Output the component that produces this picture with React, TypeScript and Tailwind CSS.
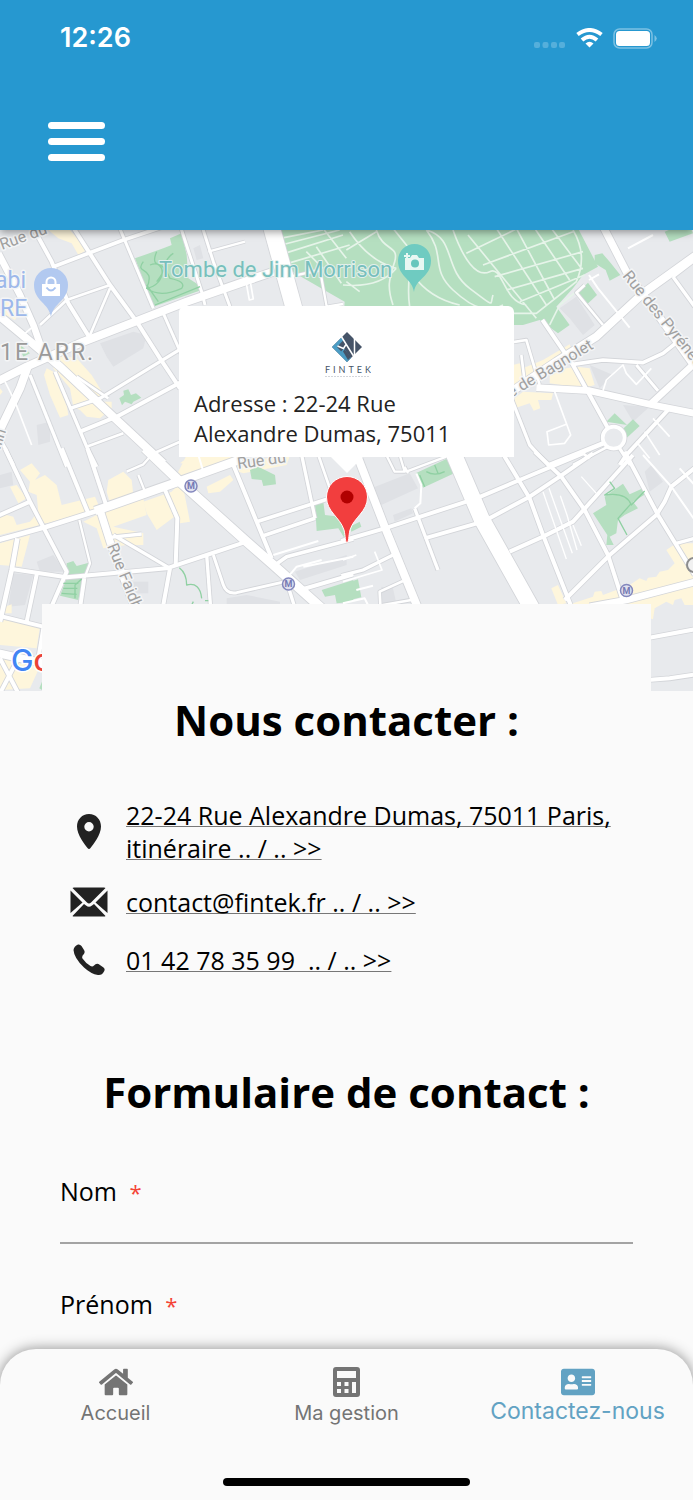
import React from "react";
import { FaHome, FaAddressCard } from "react-icons/fa";

type Road = [number, string];
type Tile = {
  x: number;
  y: number;
  parks: string[];
  shops: string[];
  blocks: string[];
  roads: Road[];
  paths: string[];
};

const tiles: Tile[] = [
  {
    x: 0,
    y: 675,
    parks: [
      "405,100 490,70 515,60 510,40 545,25 560,90 565,160 605,185 605,195 460,245",
      "50,350 90,385 70,395",
      "358,520 372,510 370,497 385,493 393,510 408,505 424,518 400,530 395,538 375,530 366,541",
    ],
    shops: [
      "145,15 210,15 260,75 235,90 215,55 175,40",
      "20,220 60,255 45,285 0,260",
      "140,430 160,440 200,540 205,570 180,578 150,510 132,450",
      "170,390 230,400 275,450 315,515 290,530 335,530 335,550 300,580 260,575 240,555 220,545 210,490 160,430",
      "540,715 560,700 700,700 690,720",
      "0,490 8,500 0,510",
    ],
    blocks: ["300,355 400,320 440,330 430,370 340,425 320,395", "110,600 150,590 150,650 115,660", "580,70 600,60 610,100 590,105"],
    roads: [
      [20, "M-5 85L60 210L100 300L130 385"],
      [24, "M-5 270L85 345L180 425L345 580L490 715"],
      [24, "M-5 468L80 425L250 350L560 230L820 140"],
      [24, "M85 420L60 490L-5 625"],
      [12, "M95 0L155 110L205 235L270 340"],
      [12, "M215 0L330 180L410 290L480 400L540 490"],
      [11, "M160 125L370 45L490 5"],
      [9, "M355 0L460 250"],
      [9, "M540 0L605 200L615 240"],
      [9, "M605 0L640 110L690 245"],
      [50, "M810 -10L882 250"],
      [8, "M120 300L200 225L330 180"],
      [8, "M330 190L270 330"],
      [9, "M490 265L545 390"],
      [10, "M545 370L300 520L210 550"],
      [12, "M545 470L350 575L240 620"],
      [10, "M90 450L200 725"],
      [10, "M165 440L260 665L290 725"],
      [8, "M230 455L325 520"],
      [8, "M260 665L370 625"],
      [8, "M450 690L540 650"],
      [10, "M0 640L40 720"],
      [5, "M15 470L45 530L95 660"],
      [7, "M625 80L735 50"],
      [7, "M870 155L960 135L980 245L1029 237"],
      [5, "M738 170L748 225L760 222L750 165"],
      [5, "M75 325L105 300"],
    ],
    paths: ["M430 110C400 150 470 120 440 190C500 180 500 100 450 120M470 80C440 150 530 90 470 170M440 190Q480 220 545 190Q560 170 510 160Q480 110 520 85M465 240L600 185M440 180L475 230"],
  },
  {
    x: 1029,
    y: 675,
    parks: [
      "-189,10 705,10 765,125 720,150 690,190 640,245 680,300 645,325 590,285 540,300 400,300 0,300 5,230 -170,130",
      "755,90 778,85 800,110 832,150 800,167 788,135 755,115",
      "735,173 762,210 730,240 702,205",
      "965,20 990,10 1040,0 1050,25 980,50",
      "815,565 852,600 790,590",
      "870,583 890,603 850,640 842,610",
    ],
    shops: [
      "510,420 530,415 540,430 600,405 680,358 690,385 680,400 580,460 510,480",
      "515,520 540,500 630,505 625,525 585,525 592,550 572,557 560,535 515,550",
      "700,425 740,430 755,480 720,490 620,475 620,450 670,430",
    ],
    blocks: ["650,250 700,215 755,300 720,330 680,280", "740,420 810,450 770,490", "840,540 920,545 870,590"],
    roads: [
      [22, "M778 0L850 140L920 235L1055 425"],
      [24, "M1060 90L900 205L760 335L640 410L505 500"],
      [20, "M580 488L740 497L930 540L1055 565"],
      [20, "M1060 410L925 535"],
      [12, "M975 555L850 690L830 720"],
      [12, "M598 285L690 420L740 510L795 610"],
      [11, "M690 418L780 405L900 413L960 385L1010 345"],
      [9, "M880 420L945 497"],
      [14, "M780 655L620 720"],
      [8, "M720 685L740 700M690 720L795 665"],
      [10, "M830 670L862 720"],
      [10, "M505 520L560 660L620 725"],
      [8, "M535 390L545 470"],
      [8, "M505 352L550 345L590 480"],
      [8, "M725 180L700 203L780 300"],
      [6, "M738 150L765 190L860 308M738 165L768 148"],
      [5, "M635 500L683 630L665 655L617 660L612 620L670 598"],
      [10, "M990 155L1055 245M990 155L1055 105"],
      [6, "M855 70L930 30"],
      [5, "M780 497L790 465L840 420L850 445L880 478L925 430"],
      [5, "M930 580L980 635M905 620L950 690M880 650L920 700"],
    ],
    paths: [],
  },
  {
    x: 0,
    y: 1365,
    parks: [
      "750,45 775,35 825,60 828,88 790,93 785,75 755,72",
      "200,325 220,318 230,333 272,322 250,365 235,435 180,422 200,370",
      "945,145 970,140 975,180 1020,185 1050,210 1040,260 1015,220 950,228",
      "965,405 1060,375 1060,440 1010,445 1005,420 975,425",
      "126,680 118,700 126,705",
    ],
    shops: [
      "60,45 95,25 120,55 105,75 135,60 170,90 185,150 285,125 300,160 140,205 0,240 0,175 40,185 50,210 90,200 115,170 110,120 85,110 90,80",
      "30,95 50,90 80,130 55,145",
      "325,75 370,50 395,75 400,120 330,145 320,110",
      "430,140 515,110 545,75 570,200 540,205 530,180 470,225 440,175",
      "525,70 560,0 700,0 680,30 600,45 570,60",
      "620,95 690,60 700,75 660,110 625,115",
      "320,160 430,130 440,180 340,215 430,235 430,270 380,270 310,280 290,220 250,200 290,180",
      "700,45 800,10 870,0 860,30 730,55",
      "0,265 90,240 65,335 0,330",
      "0,485 120,515 110,580 0,570",
      "0,610 126,620 90,700 0,705",
      "15,455 35,448 35,475 15,475",
    ],
    blocks: ["110,320 160,300 195,350 120,350", "680,430 740,420 840,440 840,450 680,450", "885,350 1040,300 1040,330 900,375", "0,60 35,50 40,90 0,100", "25,510 75,520 75,565 25,555", "400,380 445,380 445,415 400,415", "40,355 100,360 75,450 25,455"],
    roads: [
      [14, "M-5 255L140 215L290 168"],
      [26, "M285 168L550 75L725 12"],
      [12, "M15 -20L90 140L200 350L150 465"],
      [12, "M185 -20L265 175"],
      [12, "M262 -20L320 155"],
      [22, "M300 165L330 260L405 460"],
      [12, "M-5 182L90 140"],
      [14, "M52 250L35 345L0 500"],
      [12, "M35 342L200 367L500 340L620 300L740 260"],
      [12, "M112 350L80 500"],
      [12, "M253 370L240 460"],
      [7, "M238 195L270 325L253 370"],
      [12, "M495 105L532 190L527 330"],
      [10, "M330 247L425 237"],
      [10, "M340 240L510 340"],
      [12, "M510 340L488 460"],
      [10, "M620 300L632 460"],
      [9, "M640 300L670 390Q680 418 710 413L855 380"],
      [28, "M435 -20L545 85L740 260L820 330L965 460"],
      [12, "M700 30L770 200L815 310"],
      [11, "M770 200L990 130"],
      [11, "M790 242L945 190"],
      [10, "M945 190L905 0"],
      [8, "M955 0L1000 130"],
      [11, "M825 330L860 305L1060 252"],
      [6, "M865 365L890 335L965 315M820 300L955 258M910 335L1060 305"],
      [12, "M900 405L1060 358"],
      [10, "M865 395L885 460"],
      [7, "M380 50L430 28L450 5"],
      [7, "M415 60L435 110"],
      [6, "M595 0L610 50"],
      [12, "M0 483L130 515"],
      [24, "M-5 595L130 625"],
      [12, "M0 715L60 600"],
      [12, "M0 610L55 715"],
      [12, "M130 520L115 610"],
    ],
    paths: ["M538 338Q560 355 560 390Q600 380 605 430M575 450L580 440M615 437L625 437M190 385L235 385M190 400L232 400M185 415L230 418M245 372L225 390L225 430"],
  },
  {
    x: 1029,
    y: 1365,
    parks: [
      "218,55 310,12 337,53 240,98",
      "785,125 795,118 840,86 860,118 900,100 907,118 870,140 885,160 845,180 825,195 820,235 800,245 812,270 790,270 793,240 750,175 790,150",
      "0,388 45,373 55,427 0,440",
      "20,215 50,200 55,215 25,230",
    ],
    shops: [
      "625,400 645,390 670,445 645,450",
      "690,445 750,425 755,410 775,408 780,420 860,390 890,370 910,378 915,368 940,365 950,350 975,345 995,325 970,285 1000,265 1055,265 1055,450 1025,450 1015,430 995,435 990,450 970,440 935,460 930,493 920,490 920,450 690,450",
    ],
    blocks: ["85,100 200,55 225,100 115,150", "150,180 205,160 210,175 155,200", "905,50 925,30 960,80 920,110", "115,395 150,400 160,445 118,445"],
    roads: [
      [48, "M325 -20L415 190L575 475"],
      [24, "M40 -5L125 215L225 460"],
      [12, "M-5 258L125 220L400 130L530 75L720 -5"],
      [12, "M245 250L420 200L560 125L650 65L750 -5"],
      [10, "M215 160L285 345"],
      [6, "M220 55L235 90L232 145L215 160"],
      [12, "M470 -20L560 130L600 240L683 450"],
      [12, "M575 -10L655 65L725 165L795 300L837 430"],
      [12, "M500 290L600 245L690 200L870 0"],
      [12, "M665 435L800 300L940 180L965 140L985 95L1060 35"],
      [12, "M845 -10L945 180L1000 270L1055 360"],
      [10, "M1000 265L1055 250"],
      [6, "M900 0L985 95L1055 195M1010 40L1055 90"],
      [20, "M740 455L850 435L1060 380"],
      [10, "M-5 362L60 345L150 300"],
      [5, "M95 290L117 345L0 380M0 315L40 300"],
      [8, "M112 450L110 410L180 378M120 450L205 435"],
      [6, "M40 405L90 392M0 445L65 430L75 450"],
      [12, "M915 549L1060 522"],
      [12, "M915 675L980 670L1060 658"],
      [7, "M130 0L155 50L185 50L170 0M190 50L310 5M185 35L195 55"],
      [4, "M600 110L670 312M618 100L688 295M652 122L672 180L702 285M690 210L715 272M715 65L760 115"],
    ],
    paths: ["M800 80L815 100L785 120Q850 110 865 150L905 108M865 145L825 190L852 240M230 60L245 95M250 50Q275 65 305 50M275 30L285 55"],
  },
];

const cemeteryPaths =
  "M375 30L580 280M460 10L610 240M520 10L635 225M575 10L680 165M625 10L715 130M370 85L520 12M420 120L690 20M455 155L720 80M490 195L720 130M530 230L725 150M250 15C310 90 260 130 330 195S440 260 480 240M250 15C340 40 300 130 380 190S440 240 450 210M330 15C360 100 400 160 440 140S480 230 550 240M150 10L210 85Q190 180 200 245M210 150Q260 220 350 240M100 15C120 80 170 60 155 110S130 180 150 240M0 180Q110 190 160 130M10 75L100 20M20 20Q80 110 160 130M690 15Q735 90 700 170L580 265L510 265M700 200L650 240L620 300M10 170L50 200M-189 40L-60 15M-185 60L-10 15M-175 85L0 30M-165 115L20 60M-80 65L-5 175M-60 10L10 100M-110 80L-60 130";

function StreetMap() {
  return (
    <svg viewBox="0 230 693 461" preserveAspectRatio="xMidYMid slice" className="block h-full w-full" aria-hidden="true">
      <rect y="230" width="693" height="461" fill="#e8eaed" />
      <g transform="scale(0.33333)">
        {tiles.map((t, i) => (
          <g key={i} transform={`translate(${t.x} ${t.y})`}>
            {t.blocks.map((p) => <polygon key={p} points={p} fill="#dfe1e5" />)}
            {t.shops.map((p) => <polygon key={p} points={p} fill="#fef6dc" />)}
            {t.parks.map((p) => <polygon key={p} points={p} fill="#b5dfc0" />)}
          </g>
        ))}
        <path transform="translate(1029 675)" d={cemeteryPaths} fill="none" stroke="#e6f4e9" strokeWidth="5" />
        {tiles.map((t, i) => (
          <g key={i} transform={`translate(${t.x} ${t.y})`} fill="none" stroke="#d3d5d9" strokeLinejoin="round">
            {t.roads.filter(([w]) => w > 6).map(([w, d]) => <path key={d} d={d} strokeWidth={w + 5} />)}
            {i === 1 && <circle cx="812" cy="638" r="33" strokeWidth="16" />}
          </g>
        ))}
        {tiles.map((t, i) => (
          <g key={i} transform={`translate(${t.x} ${t.y})`} fill="none" stroke="#fff" strokeLinejoin="round">
            {t.roads.map(([w, d]) => <path key={d} d={d} strokeWidth={w} />)}
            {i === 1 && <circle cx="812" cy="638" r="33" strokeWidth="11" fill="#e8eaed" />}
            {t.paths.map((d) => <path key={d} d={d} stroke="#8fd0a2" strokeWidth="4" />)}
          </g>
        ))}
      </g>
      <g fontFamily="Roboto, sans-serif" stroke="#f4f5f6" strokeWidth="3" strokeLinejoin="round" paintOrder="stroke">
        <g fill="#a0a0a0" fontSize="16">
          <text transform="translate(2 250) rotate(-20)">Rue du</text>
          <text transform="translate(238 469) rotate(-8)">Rue du</text>
          <text transform="translate(107 546) rotate(68)">Rue Faidherbe</text>
          <text transform="translate(511 398) rotate(-31)">e de Bagnolet</text>
          <text transform="translate(622 276) rotate(51)">Rue des Pyrénées</text>
          <text transform="translate(0 450) rotate(-72)">llin</text>
        </g>
        <text x="0" y="360" fill="#9a9a9a" fontSize="23" letterSpacing="2">1E ARR.</text>
        <g fill="#9db8ea" fontSize="23">
          <text x="-5" y="288">abi</text>
          <text x="0" y="316">RE</text>
        </g>
        <text x="159" y="277" fill="#78bfbd" fontSize="22" stroke="#e3f0ec" strokeWidth="2">Tombe de Jim Morrison</text>
      </g>
      <g>
        <path d="M51 317C49 303 34 301 34 285a17 17 0 0 1 34 0C68 301 53 303 51 317Z" fill="#b2c9f0" />
        <path d="M42 284h18v12H42z" fill="#fff" />
        <path d="M46.500 284v-2a4.500 4.500 0 0 1 9 0v2" fill="none" stroke="#fff" strokeWidth="2" />
        <path d="M46.500 287.500q4.500 6 9 0" fill="none" stroke="#a9c3f0" strokeWidth="2" />
        <path d="M414 292C412 278 398 277 398 260.500a16.500 16.500 0 0 1 33 0C431 277 416 278 414 292Z" fill="#6fcbc1" />
        <path d="M405 258h5l2-3h5l2 3h5v12h-19z" fill="#e8f7f3" />
        <circle cx="415" cy="263.500" r="4" fill="#67c6bd" />
        <path d="M407 253v6M404 256h6" stroke="#e8f7f3" strokeWidth="2" />
      </g>
      {[[191, 486], [288.500, 584], [626.500, 590.500]].map(([x, y]) => (
        <g key={x}>
          <circle cx={x} cy={y} r="6" fill="#dfe0ee" stroke="#8387bd" strokeWidth="1.500" />
          <text x={x} y={y + 3} textAnchor="middle" fontFamily="Roboto, sans-serif" fontWeight="700" fontSize="9" fill="#7478b3">M</text>
        </g>
      ))}
      <circle cx="694" cy="565" r="7" fill="#f1f1f1" stroke="#8d8d8d" strokeWidth="2" />
      <text x="11" y="671" fontFamily="Inter, sans-serif" fontWeight="500" fontSize="30" stroke="#fff" strokeWidth="3" paintOrder="stroke">
        <tspan fill="#4285f4">G</tspan><tspan fill="#ea4335">o</tspan>
      </text>
    </svg>
  );
}

function FintekLogo() {
  return (
    <svg width="48" height="50" viewBox="0 0 48 50" role="img" aria-label="Fintek" className="shrink-0">
      <path d="M24 1L39 16L24 31L9 16Z" fill="#465468" />
      <path d="M9 16L18.500 6.500L20.500 9L14 16L24 26.500V31Z" fill="#4b9cc4" />
      <path d="M18 20.500L21 17.500L28 27L24 31Z" fill="#4b9cc4" />
      <path d="M20 20.500L21.500 18.500L28 26L25 29Z" fill="#465468" />
      <path d="M18 5L30.500 25M31.500 6V24M14.500 15L20.500 17.500L23 13.500" stroke="#fff" strokeWidth="1.500" fill="none" />
      <text x="2" y="42" fontFamily="Lato, sans-serif" fontSize="9" letterSpacing="3" fill="#465468">FINTEK</text>
      <path d="M2 45.500H46" stroke="#d3d6db" strokeDasharray="2 1" />
    </svg>
  );
}

function CalculatorIcon() {
  return (
    <svg width="27" height="30" viewBox="0 0 27 30" aria-hidden="true">
      <path
        fillRule="evenodd"
        fill="currentColor"
        d="M3 0H24Q27 0 27 3V27Q27 30 24 30H3Q0 30 0 27V3Q0 0 3 0ZM4 4V11H23V4ZM4 15V19H8V15ZM11.500 15V19H15.500V15ZM19 15V26H23V15ZM4 22V26H8V22ZM11.500 22V26H15.500V22Z"
      />
    </svg>
  );
}

const contacts = [
  {
    href: "#itineraire",
    text: "22-24 Rue Alexandre Dumas, 75011 Paris, itinéraire .. / .. >>",
    icon: (
      <svg width="26" height="36" viewBox="0 0 26 36" aria-hidden="true">
        <path fillRule="evenodd" fill="currentColor" d="M13 0C20 0 25 5.500 25 12.500C25 21 17 31 14.500 34Q13 36 11.500 34C9 31 1 21 1 12.500C1 5.500 6 0 13 0ZM13 8a4.700 4.700 0 1 0 0 9.400a4.700 4.700 0 1 0 0-9.400Z" />
      </svg>
    ),
  },
  {
    href: "mailto:contact@fintek.fr",
    text: "contact@fintek.fr .. / .. >>",
    icon: (
      <svg width="38" height="30" viewBox="0 0 38 30" aria-hidden="true">
        <path fill="currentColor" d="M2.500 1Q3 0.500 4 0.500H34Q35 0.500 35.500 1L21 15.500Q19 17.500 17 15.500ZM0.500 3.500L12.500 15.500L0.500 26ZM37.500 3.500L25.500 15.500L37.500 26ZM2.500 29L14 17L16 18.500Q19 21 22 18.500L24 17L35.500 29Q35 29.500 34 29.500H4Q3 29.500 2.500 29Z" />
      </svg>
    ),
  },
  {
    href: "tel:0142783599",
    text: "01 42 78 35 99\u00a0 .. / .. >>",
    icon: (
      <svg width="32" height="32" viewBox="0 0 32 32" aria-hidden="true">
        <path fill="currentColor" d="M0.500 6Q1 2 5 0.500Q7 0 8.500 2L11 6Q12.500 8.500 10.500 10.500Q8.500 12.500 9.500 14.500Q13 19.500 17.500 22Q19.500 23 21 21.500Q23 19 25.500 20L30.500 23.500Q32.500 25 31 27.500Q29 31.500 25 31Q18 30 11 23.500Q1 14 0.500 6Z" />
      </svg>
    ),
  },
];

function Field({ id, label }: { id: string; label: string }) {
  return (
    <div className="mb-[43px]">
      <label htmlFor={id} className="block text-[25px] leading-[34px]">
        {label} <span className="ml-1.5 text-[22px] text-[#f44336]">*</span>
      </label>
      <input id={id} type="text" className="block h-[35px] w-full border-b-2 border-[#a3a3a3] bg-transparent text-[25px] outline-none" />
    </div>
  );
}

export default function App() {
  return (
    <div className="flex h-screen flex-col overflow-hidden bg-[#fafafa] font-['Open_Sans',sans-serif] text-black">
      <header className="relative z-10 h-[230px] shrink-0 bg-[#2698d0] shadow-[0_2px_8px_rgba(0,0,0,0.4)]">
        <div className="flex h-[76px] items-center justify-between pr-9 pl-[60px] text-white">
          <span className="font-['Inter',sans-serif] text-[27px] font-semibold">12:26</span>
          <div className="flex items-center gap-[10px]">
            <svg width="32" height="26" viewBox="0 0 32 26" aria-hidden="true" fill="#55afdb">
              <rect x="0" y="17" width="6" height="6" rx="2" />
              <rect x="8.500" y="17" width="6" height="6" rx="2" />
              <rect x="17" y="17" width="6" height="6" rx="2" />
              <rect x="25" y="17" width="6" height="6" rx="2" />
            </svg>
            <svg width="27" height="20" viewBox="0 0 27 20" aria-hidden="true" fill="none" stroke="#fff" strokeWidth="4">
              <path d="M1.500 6.500Q13.500 -2.500 25.500 6.500M6 12Q13.500 5.500 21 12" />
              <path d="M9.500 15.500Q13.500 12 17.500 15.500L13.500 19.500Z" fill="#fff" stroke="none" />
            </svg>
            <svg width="44" height="21" viewBox="0 0 44 21" aria-hidden="true">
              <rect x="1" y="1" width="38" height="19" rx="5.500" fill="none" stroke="#7cc1e3" strokeWidth="1.500" />
              <rect x="3" y="3" width="34" height="15" rx="3.500" fill="#fff" />
              <path d="M41.500 7Q46 10.500 41.500 14Z" fill="#7cc1e3" />
            </svg>
          </div>
        </div>
        <button type="button" aria-label="Menu" className="mt-[46px] ml-12 flex w-[57px] flex-col gap-[9px]">
          <span className="h-[7px] w-full rounded-full bg-white" />
          <span className="h-[7px] w-full rounded-full bg-white" />
          <span className="h-[7px] w-full rounded-full bg-white" />
        </button>
      </header>

      <main className="min-h-0 flex-1 overflow-y-auto [scrollbar-width:none]">
        <section className="relative h-[461px] overflow-hidden" aria-label="Carte">
          <StreetMap />
          <div className="absolute inset-x-0 top-[76px] flex flex-col items-center">
            <div className="flex h-[151px] w-[335px] flex-col items-center rounded-t-md bg-white px-[15px] pt-[25px]">
              <FintekLogo />
              <p className="mt-[7px] w-full text-[22px] leading-[30px] text-[#222]">Adresse : 22-24 Rue Alexandre Dumas, 75011</p>
            </div>
            <svg width="48" height="86" viewBox="0 0 48 86" role="img" aria-label="Position">
              <path d="M8 0H40L24 16Z" fill="#fff" />
              <path d="M24 85.500C22 85.500 22.500 79 21 73C17 60 3.500 55 3.500 40a20.500 20.500 0 0 1 41 0C44.500 55 31 60 27 73C25.500 79 26 85.500 24 85.500Z" fill="#f23e3e" stroke="#fff" />
              <circle cx="24" cy="40" r="6.500" fill="#b10000" />
            </svg>
          </div>
        </section>

        <section className="relative mx-[42px] -mt-[87px] bg-[#fafafa] px-[18px] pt-[86px]">
          <h1 className="text-center text-[42px] leading-[60px] font-bold">Nous contacter :</h1>
          <ul className="mt-[49px] flex flex-col gap-4">
            {contacts.map((c) => (
              <li key={c.href} className="flex items-center gap-[9px]">
                <span className="flex h-[42px] w-[57px] shrink-0 items-center justify-center text-[#222]">{c.icon}</span>
                <a href={c.href} className="text-[25px] leading-[33px] underline decoration-[#777] decoration-1 underline-offset-1 [text-decoration-skip-ink:none]">
                  {c.text}
                </a>
              </li>
            ))}
          </ul>
          <form className="mt-[81px]">
            <h2 className="mb-[52px] text-center text-[42px] leading-[60px] font-bold">Formulaire de contact :</h2>
            <Field id="nom" label="Nom" />
            <Field id="prenom" label="Prénom" />
          </form>
        </section>
      </main>

      <nav className="relative z-10 flex h-[151px] shrink-0 flex-col rounded-t-[36px] bg-[#fafafa] font-['Inter',sans-serif] shadow-[0_0_14px_rgba(0,0,0,0.45)]">
        <div className="grid flex-1 grid-cols-3 text-[20px] text-[#747474]">
          <a href="#accueil" className="flex flex-col items-center pt-4">
            <FaHome className="size-[34px]" />
            <span className="leading-7">Accueil</span>
          </a>
          <a href="#gestion" className="flex flex-col items-center pt-4">
            <span className="flex h-[34px] items-center"><CalculatorIcon /></span>
            <span className="leading-7">Ma gestion</span>
          </a>
          <a href="#contact" aria-current="page" className="flex flex-col items-center pt-4 text-[#62a2c3]">
            <FaAddressCard className="size-[34px]" />
            <span className="text-[23px] leading-6">Contactez-nous</span>
          </a>
        </div>
        <div className="mx-auto mb-[14px] h-2 w-[247px] rounded-full bg-black" />
      </nav>
    </div>
  );
}
